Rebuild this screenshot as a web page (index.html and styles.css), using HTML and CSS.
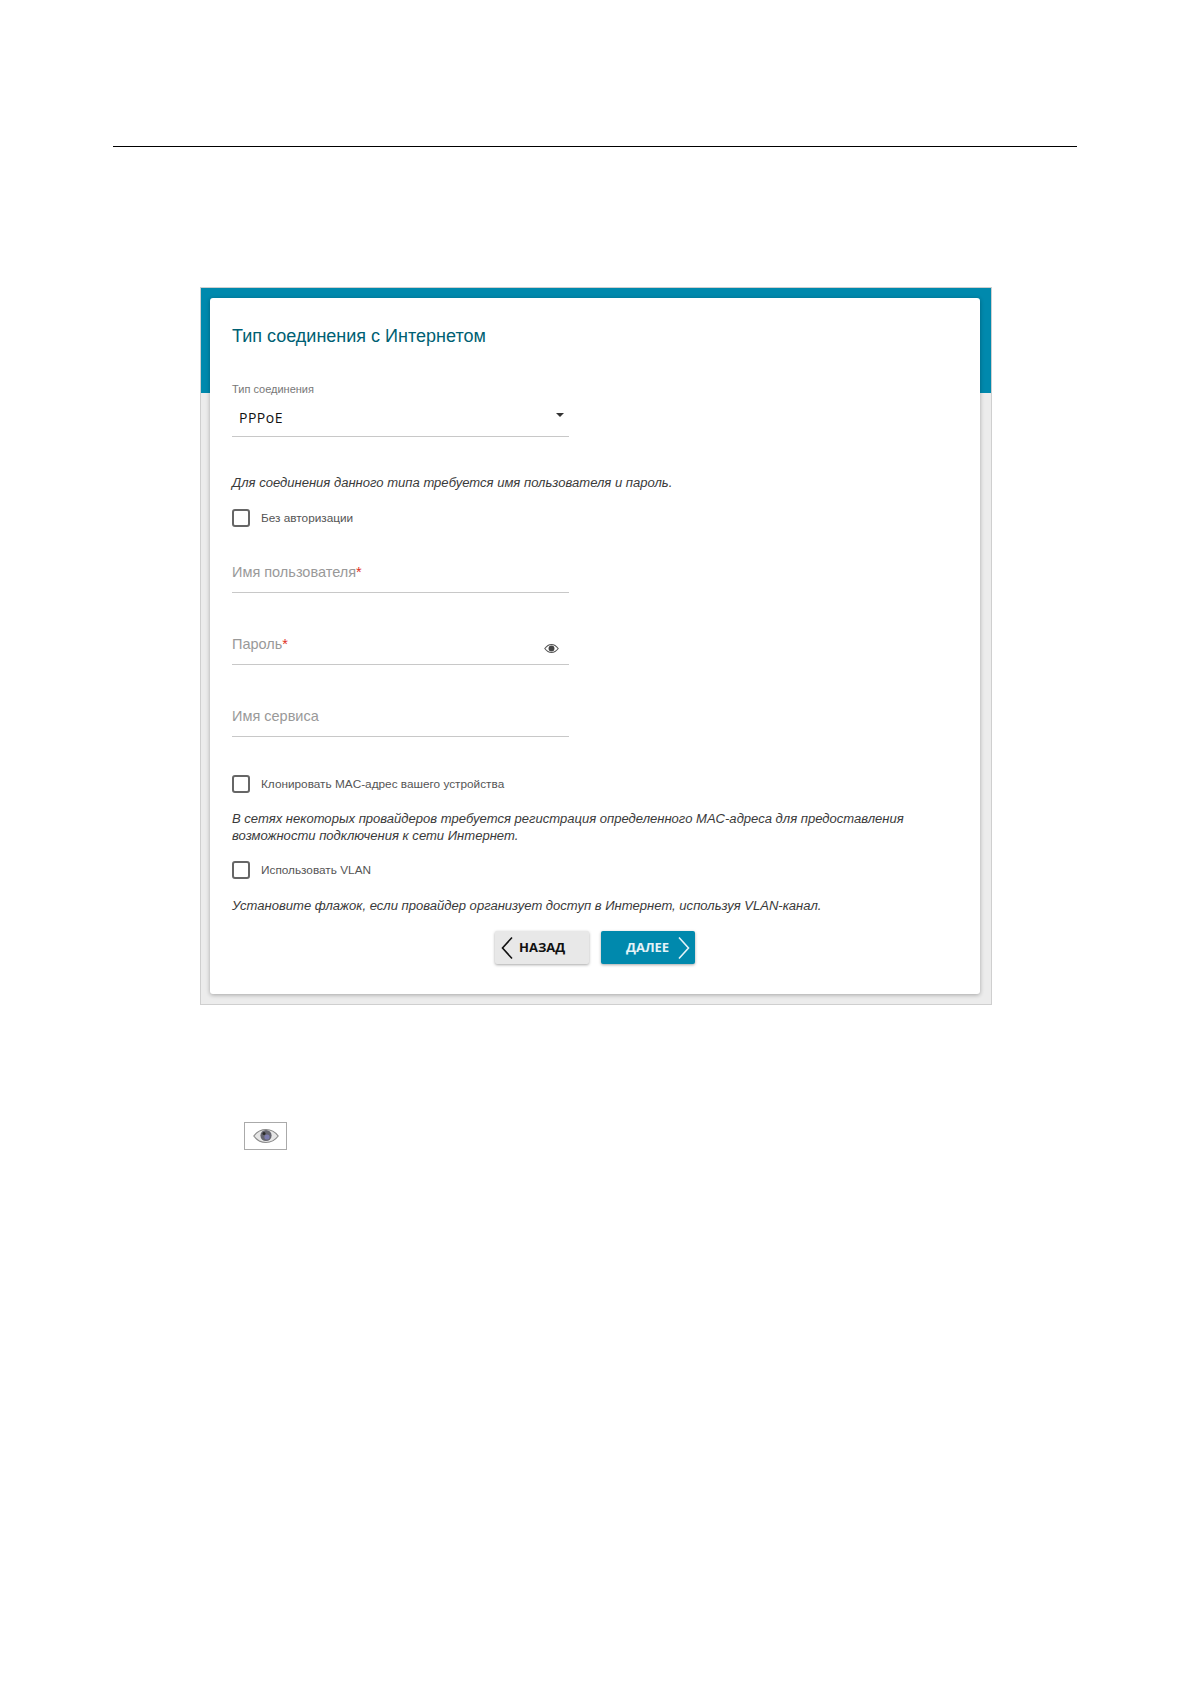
FILE: index.html
```html
<!DOCTYPE html>
<html lang="ru">
<head>
<meta charset="utf-8">
<title>Тип соединения с Интернетом</title>
<link rel="stylesheet" href="styles.css">
</head>
<body>
<hr class="top-rule">
<section class="frame">
  <div class="card">
    <h1 class="title">Тип соединения с Интернетом</h1>
    <div class="select">
      <div class="select-label">Тип соединения</div>
      <div class="select-value">PPPoE<span class="caret"></span></div>
    </div>
    <p class="hint hint-first">Для соединения данного типа требуется имя пользователя и пароль.</p>
    <label class="check check-first"><span class="box"></span>Без авторизации</label>
    <div class="field field-first">Имя пользователя<span class="req">*</span></div>
    <div class="field">Пароль<span class="req">*</span>
      <svg class="eye" viewBox="0 0 16 12" width="15" height="11"><path d="M.7 6C3 2.800 5.400 1.600 8 1.600s5 1.200 7.300 4.400C13 9.200 10.600 10.400 8 10.400S3 9.200.7 6z" fill="none" stroke="#555" stroke-width="1.200"/><circle cx="8" cy="6" r="3.200" fill="#444"/></svg>
    </div>
    <div class="field">Имя сервиса</div>
    <label class="check check-clone"><span class="box"></span>Клонировать MAC-адрес вашего устройства</label>
    <p class="hint hint-clone">В сетях некоторых провайдеров требуется регистрация определенного MAC-адреса для предоставления<br>возможности подключения к сети Интернет.</p>
    <label class="check check-vlan"><span class="box"></span>Использовать VLAN</label>
    <p class="hint hint-vlan">Установите флажок, если провайдер организует доступ в Интернет, используя VLAN-канал.</p>
    <div class="actions">
      <button class="btn btn-back" type="button"><svg class="chev" viewBox="0 0 12 24" width="12" height="24"><path d="M11 1.500 1.500 12 11 22.500" fill="none" stroke="#111" stroke-width="1.600"/></svg><span class="btn-text">НАЗАД</span></button>
      <button class="btn btn-next" type="button"><span class="btn-text">ДАЛЕЕ</span><svg class="chev" viewBox="0 0 12 24" width="12" height="24"><path d="M1 1.500 10.500 12 1 22.500" fill="none" stroke="#e4f3f8" stroke-width="1.600"/></svg></button>
    </div>
  </div>
</section>
<div class="icon-sample">
  <svg viewBox="0 0 26 16" width="26" height="16"><path d="M.8 8C4.500 3 8.600 1.500 13 1.500S21.500 3 25.200 8C21.500 13 17.400 14.500 13 14.500S4.500 13 .8 8z" fill="#e6e6e6" stroke="#8a8a8a" stroke-width="1.200"/><circle cx="13" cy="7.500" r="5.600" fill="#66666f"/><circle cx="14" cy="9" r="2.600" fill="#7c7cae"/><circle cx="11" cy="5.500" r="1.500" fill="#2b2b2b"/></svg>
</div>
</body>
</html>
```
FILE: styles.css
```css
* { box-sizing: border-box; }
html, body { margin: 0; padding: 0; background: #fff; }
body { height: 1684px; overflow: hidden; font-family: "Liberation Sans", Arial, sans-serif; color: #333; }

.top-rule { margin: 146px 0 0 113px; width: 964px; height: 1px; border: 0; background: #000; }

.frame {
  margin: 140px 0 0 200px;
  width: 792px;
  height: 718px;
  padding: 10px 11px 10px 9px;
  border: 1px solid #cfcfcf;
  background: linear-gradient(#0089ad 0, #0089ad 105px, #ececec 105px);
}
.card {
  height: 100%;
  padding: 0 22px;
  background: #fff;
  border-radius: 3px;
  box-shadow: 0 1px 4px rgba(0, 0, 0, .3);
}

.title { margin: 0; padding-top: 27px; font-size: 18px; line-height: 22px; font-weight: 400; color: #005f73; }

.select { margin-top: 35px; width: 337px; height: 55px; border-bottom: 1px solid #c8c8c8; }
.select-label { font-size: 11px; line-height: 14px; color: #777; }
.select-value { position: relative; margin-top: 12px; padding-left: 7px; font-family: "Open Sans", sans-serif; font-size: 14px; line-height: 20px; letter-spacing: .5px; color: #111; }
.caret { position: absolute; right: 5px; top: 5px; width: 0; height: 0; border: 4px solid transparent; border-top-color: #333; border-bottom: 0; }

.hint { margin: 0; font-size: 13.050px; line-height: 17px; font-style: italic; color: #3a3a3a; }
.hint-first { margin-top: 37px; }
.hint-clone { margin-top: 17px; }
.hint-vlan { margin-top: 18px; }

.check { display: flex; align-items: center; gap: 11px; height: 18px; font-size: 11.800px; color: #555; }
.box { flex: none; width: 18px; height: 18px; border: 2px solid #666; border-radius: 3px; background: #fff; }
.check-first { margin-top: 18px; }
.check-clone { margin-top: 38px; }
.check-vlan { margin-top: 17px; }

.field { position: relative; width: 337px; height: 39px; padding-top: 9px; border-bottom: 1px solid #c8c8c8; font-size: 14.500px; line-height: 18px; color: #999; margin-top: 33px; }
.field-first { margin-top: 27px; }
.req { color: #e0301e; }
.eye { position: absolute; right: 10px; top: 17px; }

.actions { display: flex; justify-content: center; gap: 12px; margin-top: 17px; }
.btn { display: flex; align-items: center; height: 33px; border: 0; border-radius: 2px; font-family: "Open Sans", sans-serif; font-size: 13px; font-weight: 700; box-shadow: 0 1px 3px rgba(0, 0, 0, .35); padding: 0; }
.btn-text { padding-bottom: 2px; }
.btn-back { width: 94px; padding-left: 6px; gap: 6px; background: #e8e8e8; color: #111; }
.btn-next { width: 94px; padding-left: 25px; gap: 9px; background: #0089ad; color: #e4f3f8; }

.icon-sample { display: flex; align-items: center; justify-content: center; margin: 117px 0 0 244px; width: 43px; height: 28px; border: 1px solid #aaa; }
```
